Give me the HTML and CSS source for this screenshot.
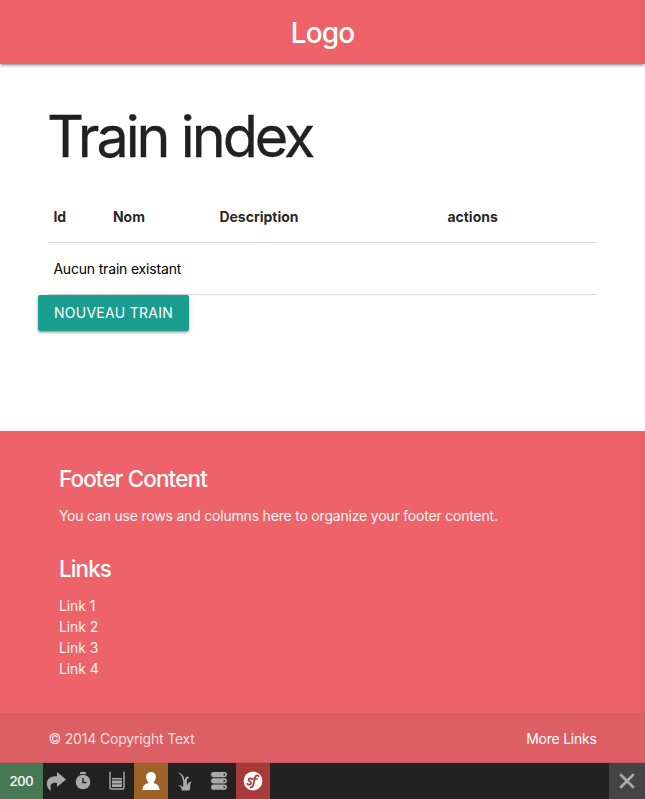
FILE: index.html
```html
<!DOCTYPE html>
<html lang="fr">
<head>
<meta charset="utf-8">
<title>Train index</title>
<link rel="stylesheet" href="styles.css">
</head>
<body>
<nav class="navbar"><a class="brand">Logo</a></nav>
<main class="container">
  <h1>Train index</h1>
  <table class="trains">
    <thead>
      <tr><th class="col-id">Id</th><th class="col-name">Nom</th><th class="col-description">Description</th><th>actions</th></tr>
    </thead>
    <tbody>
      <tr><td colspan="4"><span class="empty">Aucun train existant</span></td></tr>
    </tbody>
  </table>
  <a class="btn"><span>NOUVEAU TRAIN</span></a>
</main>
<footer class="page-footer">
  <div class="container footer-body">
    <section>
      <h5>Footer Content</h5>
      <p><span class="footer-text">You can use rows and columns here to organize your footer content.</span></p>
    </section>
    <section>
      <h5>Links</h5>
      <ul>
        <li>Link 1</li>
        <li>Link 2</li>
        <li>Link 3</li>
        <li>Link 4</li>
      </ul>
    </section>
  </div>
  <div class="copyright">
    <div class="container copyright-row"><span class="copy">© 2014 Copyright Text</span><a class="more">More Links</a></div>
  </div>
</footer>
<div class="toolbar">
  <span class="status">200</span>
  <span class="tool forward"><svg width="20" height="20" viewBox="0 0 20 20"><path d="M11 1 20 8.500 11 16V12C6 11.200 3.300 13 5 20 1 17 .2 13.300 1.200 10.200 2.600 6.500 6 5.200 11 5.200Z"/></svg></span>
  <span class="tool time"><svg width="16" height="20" viewBox="0 0 16 20"><path d="M5 1.500Q8 .2 11 1.500V3H5Z"/><circle cx="8" cy="11" r="7.300"/><path class="cut" d="M7.200 7h1.500v3.800H11.500v1.500H7.200Z"/></svg></span>
  <span class="tool form"><svg width="18" height="20" viewBox="0 0 18 20"><path class="line" d="M2 .8V16.200Q2 18 4 18H14Q16 18 16 16.200V.8"/><path d="M4 7h10v1.400H4ZM4 9.600h10v2.800H4ZM4 13.200h10v2.700H4Z"/></svg></span>
  <span class="tool user"><svg width="18" height="18" viewBox="0 0 18 18"><path d="M9 0C5.600 0 3.900 2.300 4.200 5.300c.2 2 .9 3.500 2 4.600v1.300c-3.300.8-5.500 2-5.700 6.800h17c-.2-4.800-2.400-6-5.700-6.800V9.900c1.100-1.100 1.800-2.600 2-4.600C14.100 2.300 12.400 0 9 0Z"/></svg></span>
  <span class="tool twig"><svg width="16" height="19" viewBox="0 0 16 19"><path d="M1 .5C5 1 7.200 4.500 7.700 8.800 8 6.300 9 4.500 10.600 4.500c1 0 1.400.8 1.200 2.200-.8-.6-1.600-.4-1.800 1-.3 2.500-.1 4.300.2 5.800.5-2.200 1.800-3.700 4.800-3.900-1.700 1.500-2 3.300-1.700 5.400L12.500 18.500H4.800c.1-2.400-1-4.300-3.800-5.100 2.400-.5 4 .4 5 1.900C6.900 9.500 5.700 3.700 1 .5Z"/></svg></span>
  <span class="tool cache"><svg width="18" height="18" viewBox="0 0 18 18"><rect x="1" y="0" width="16" height="5.200" rx="2.400"/><rect x="1" y="6.300" width="16" height="5.200" rx="2.400"/><rect x="1" y="12.600" width="16" height="5.200" rx="2.400"/><path class="cut" d="M13.500 1.800h1.600v1.600h-1.600ZM13.500 8.100h1.600v1.600h-1.600ZM13.500 14.400h1.600V16h-1.600Z"/></svg></span>
  <span class="tool symfony"><svg width="20" height="20" viewBox="0 0 20 20"><circle cx="10" cy="10" r="9.400"/><path class="sf" d="M8.600 8.300C8.500 6.800 5.500 7 5.500 8.900c.1 1.400 2.700 1.500 2.600 3.200-.1 1.900-3.300 2.200-3.700.6M15.600 5.400c-.2-2-3-1.300-3.600 1.300L10.400 13.500c-.5 2.100-1.500 3.200-3 2.700M10 8h4"/></svg></span>
  <span class="close"><svg width="16" height="16" viewBox="0 0 16 16"><path d="m2 2 12 12M14 2 2 14"/></svg></span>
</div>
</body>
</html>
```
FILE: styles.css
```css
* { box-sizing: border-box; }
html { font: 14px/1.5 Inter, "Liberation Sans", sans-serif; color: rgba(0,0,0,.87); }
body { margin: 0; height: 799px; overflow: hidden; background: #fff; }
.container { width: 85%; margin: 0 auto; }
.navbar { position: relative; height: 64px; background: #ee6369; display: flex; justify-content: center; line-height: 66px; box-shadow: 0 2px 2px 0 rgba(0,0,0,.14), 0 3px 1px -2px rgba(0,0,0,.12), 0 1px 5px 0 rgba(0,0,0,.2); }
.brand { color: #fff; font-size: 28px; font-weight: 500; letter-spacing: -.9px; }
main { height: 367px; }
h1 { margin: 0 0 0 -1.500px; padding-top: 39px; height: 126px; font-size: 57.500px; line-height: 67px; font-weight: 400; letter-spacing: -3px; white-space: nowrap; -webkit-text-stroke: .3px currentColor; }
.trains { width: 100%; border-collapse: collapse; table-layout: fixed; }
.trains tr { height: 52px; border-bottom: 1px solid rgba(0,0,0,.14); }
.trains th, .trains td { padding: 0 5px; text-align: left; line-height: 21px; }
.trains th { padding-top: 1px; }
.col-id { width: 59.5px; }
.col-name { width: 106.5px; }
.col-description { width: 228px; }
.empty { letter-spacing: -.18px; color: #000; }
.btn { display: flex; align-items: center; justify-content: center; width: 151px; height: 36px; margin-left: -10.400px; border-radius: 2px; background: #199d8f; color: #fff; letter-spacing: .28px; box-shadow: 0 2px 2px 0 rgba(0,0,0,.14), 0 3px 1px -2px rgba(0,0,0,.12), 0 1px 5px 0 rgba(0,0,0,.2); position: relative; }
.page-footer { height: 332px; background: #ee6369; color: #fff; }
.footer-body { height: 282px; padding: 35px 10.500px 0; }
.footer-body section { height: 90px; }
h5 { margin: 0 0 14px; font-size: 22.400px; line-height: 25px; font-weight: 500; letter-spacing: -.83px; }
p, ul { margin: 0; padding: 0; list-style: none; color: #f5f5f5; }
.footer-text { letter-spacing: -.2px; }
ul { letter-spacing: -.05px; }
.copyright { height: 50px; background: #dc5f63; border-bottom: 1px solid #c9575b; }
.copyright-row { height: 51px; display: flex; align-items: center; justify-content: space-between; }
.copy { color: rgba(255,255,255,.8); letter-spacing: -.18px; }
.more { color: #fff; letter-spacing: -.24px; }
.toolbar { height: 36px; display: flex; background: #222; color: #fff; }
.status { width: 43px; background: #467854; display: grid; place-items: center; font: 14px/36px "Liberation Sans", Arial, sans-serif; -webkit-text-stroke: .2px #fff; }
.tool { width: 34px; display: grid; place-items: center; fill: #aaa; }
.forward { width: 26px; }
.time { width: 28px; }
.form { width: 37px; }
.form svg { margin-left: 2px; }
.tool svg, .close svg { display: block; }
.tool .cut { fill: #222; }
.tool .line { fill: none; stroke: #aaa; stroke-width: 1.400; }
.user { background: #9d6326; fill: #fff; }
.symfony { background: #a93a3a; fill: #fff; }
.tool .sf { fill: none; stroke: #a93a3a; stroke-width: 1.700; stroke-linecap: round; }
.close { width: 36px; margin-left: auto; background: #444; display: grid; place-items: center; stroke: #aaa; stroke-width: 2.700; stroke-linecap: round; }
```
